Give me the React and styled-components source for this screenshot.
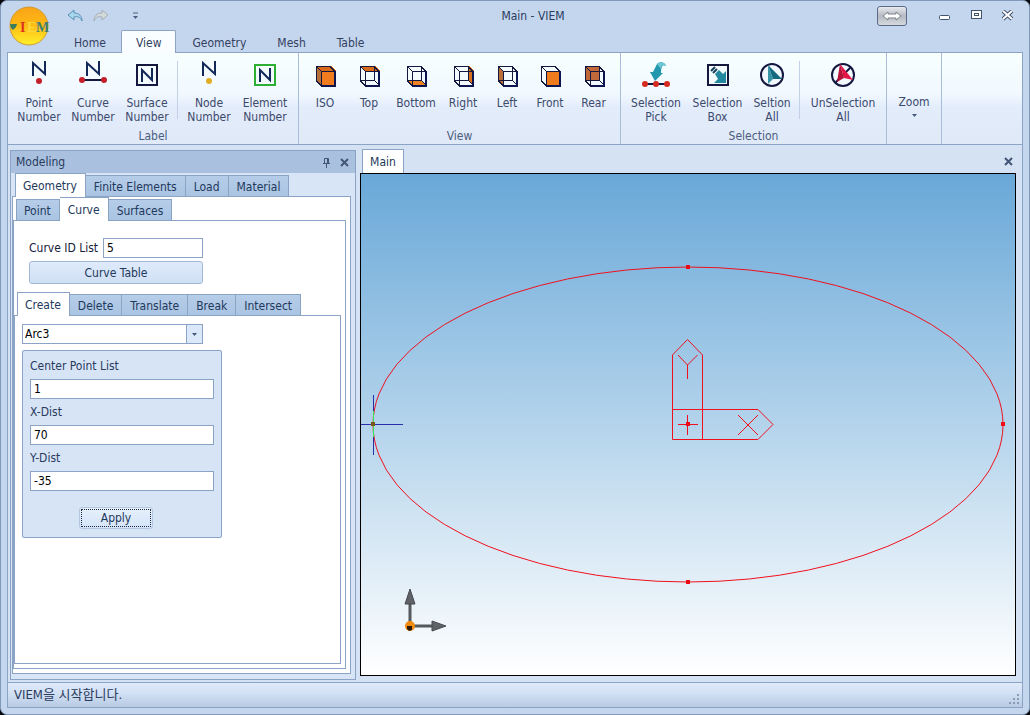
import React, { useState } from "react";
import styled, { createGlobalStyle, css } from "styled-components";

const GlobalStyle = createGlobalStyle`
  *, *::before, *::after { box-sizing: border-box; }
  html, body { margin: 0; background: #05070a; }
  body, button, input, select {
    font-family: "DejaVu Sans Condensed", "Noto Sans CJK KR", sans-serif;
    font-size: 12px;
    line-height: 14px;
  }
  button { cursor: pointer; }
`;

const line = "#8ba3c4";
const ink = "#2a3b5e";

const Window = styled.div`
  min-height: 100vh;
  display: flex;
  flex-direction: column;
  padding: 0 7px 6px;
  background: #c4d6ee;
  border: 1px solid #8299b8;
  border-radius: 7px;
  color: ${ink};
`;

const Header = styled.header`
  display: grid;
  grid-template-columns: 50px 1fr;
  grid-template-rows: 29px 22px;
`;

const Logo = styled.button`
  grid-row: 1 / 3;
  padding: 0 0 0 1px;
  border: 0;
  background: none;
  svg { display: block; }
`;

const TitleRow = styled.div`
  display: flex;
  align-items: center;
`;

const QuickAccess = styled.div`
  width: 150px;
  display: flex;
  align-items: center;
  gap: 8px;
  padding-left: 9px;
`;

const WindowTitle = styled.h1`
  flex: 1;
  margin: 0;
  text-align: center;
  font-size: 12px;
  font-weight: 400;
`;

const WindowControls = styled.div`
  width: 164px;
  display: flex;
  justify-content: flex-end;
  align-items: center;
  gap: 15px;
  padding-right: 7px;
`;

const IconButton = styled.button`
  display: block;
  padding: 0;
  border: 0;
  background: none;
  line-height: 0;
`;

const SwitchButton = styled(IconButton)`
  width: 30px;
  height: 20px;
  margin-right: 15px;
  display: grid;
  place-items: center;
  border: 1px solid #5c6b85;
  border-radius: 3px;
  background: linear-gradient(#e8eaee, #b4b9c2 50%, #d6d9de);
`;

const RibbonTabs = styled.nav`
  display: flex;
  align-items: flex-end;
  position: relative;
`;

const RibbonTab = styled.button`
  height: 23px;
  margin-bottom: -1px;
  padding: 2px 14px 0 15px;
  border: 1px solid transparent;
  border-bottom: 0;
  border-radius: 2px 2px 0 0;
  background: none;
  color: #33415f;
  ${(p) => p.$active && css`
    padding: 2px 14px 0;
    border-color: ${line};
    background: #fafdff;
  `}
`;

const Ribbon = styled.section`
  display: flex;
  height: 93px;
  margin: 0 -1px;
  border: 1px solid ${line};
  background: linear-gradient(#f8fffe, #f1f8ff 45%, #e3ecfb 60%, #dfe9f8);
`;

const Group = styled.div`
  display: flex;
  flex-direction: column;
  padding: 0 4px;
  border-right: 1px solid #a9bcd8;
`;

const GroupItems = styled.div`
  flex: 1;
  display: flex;
`;

const GroupLabel = styled.div`
  height: 15px;
  text-align: center;
  color: #4d5d80;
`;

const Divider = styled.span`
  width: 1px;
  height: 58px;
  margin: 8px 4px 0 3px;
  background: #c3d1e6;
`;

const Tool = styled.button`
  width: ${(p) => p.$width}px;
  display: flex;
  flex-direction: column;
  align-items: center;
  gap: 4px;
  padding: 7px 0 0;
  border: 0;
  background: none;
  color: #3c4a6c;
  white-space: pre;
  svg { display: block; }
`;

const ZoomTool = styled(Tool)`
  padding-top: 42px;
  gap: 5px;
`;

const Body = styled.main`
  flex: 1;
  display: flex;
  gap: 4px;
  margin: 0 -1px;
  padding: 5px 6px 2px 2px;
  border: 1px solid ${line};
  border-width: 0 1px;
  background: #d5e2f4;
`;

const Panel = styled.aside`
  width: 346px;
  flex: none;
  display: flex;
  flex-direction: column;
  border: 1px solid ${line};
  background: #d7e5f6;
`;

const PanelHeader = styled.div`
  height: 22px;
  display: flex;
  align-items: center;
  gap: 9px;
  padding: 0 6px 0 5px;
  background: #a9c1de;
`;

const PanelTitle = styled.h2`
  flex: 1;
  margin: 0;
  font-size: 12px;
  font-weight: 400;
`;

const TabStrip = styled.div`
  position: relative;
  display: flex;
  align-items: flex-end;
  height: 24px;
  margin-bottom: -1px;
  padding-left: ${(p) => p.$indent}px;
`;

const Tab = styled.button`
  height: 22px;
  padding: 1px 8px 0;
  border: 1px solid ${line};
  border-left-width: 0;
  background: linear-gradient(#b6cde8, #a9c4e3);
  color: #1e395b;
  &:first-child { border-left-width: 1px; padding-left: 7px; }
  ${(p) => p.$active && css`
    height: 24px;
    padding-bottom: 1px;
    border-bottom: 0;
    background: #fff;
  `}
`;

const Page = styled.div`
  flex: 1;
  display: flex;
  flex-direction: column;
  border: 1px solid ${line};
  background: #fff;
`;

const OuterPage = styled(Page)`
  margin: 0 4px 5px 1px;
  padding: 0 4px 4px 0;
`;

const CurvePage = styled(Page)`
  padding: 17px 4px 4px 0;
`;

const CreatePage = styled(Page)`
  align-items: flex-start;
  gap: 6px;
  padding: 8px 7px;
`;

const CurveForm = styled.div`
  width: 174px;
  display: flex;
  flex-direction: column;
  gap: 3px;
  margin: 0 0 8px 15px;
`;

const InlineField = styled.label`
  display: flex;
  align-items: center;
  justify-content: space-between;
  white-space: nowrap;
  color: #16203a;
`;

const TextInput = styled.input`
  width: ${(p) => p.$width || "100%"};
  height: 20px;
  padding: 0 3px;
  border: 1px solid ${line};
  border-radius: 0;
  background: #fff;
  color: #000;
`;

const WideButton = styled.button`
  height: 23px;
  border: 1px solid #a3b8d5;
  border-radius: 3px;
  background: linear-gradient(#dfebfb, #cfdff5);
  color: #1e395b;
`;

const SelectBox = styled.div`
  position: relative;
  width: 181px;
`;

const Select = styled.select`
  display: block;
  width: 100%;
  height: 20px;
  padding: 0 20px 0 2px;
  appearance: none;
  border: 1px solid ${line};
  border-radius: 0;
  background: #fff;
  color: #000;
`;

const SelectArrow = styled.span`
  position: absolute;
  top: 0;
  right: 0;
  width: 17px;
  height: 20px;
  display: grid;
  place-items: center;
  border: 1px solid ${line};
  background: #dbe8f9;
  pointer-events: none;
`;

const FieldBox = styled.form`
  width: 200px;
  display: flex;
  flex-direction: column;
  gap: 6px;
  padding: 8px 7px;
  border: 1px solid ${line};
  border-radius: 2px;
  background: #d6e4f6;
`;

const Field = styled.label`
  display: flex;
  flex-direction: column;
  gap: 6px;
`;

const Actions = styled.div`
  display: flex;
  justify-content: center;
  padding: 10px 12px 0 0;
`;

const ApplyButton = styled.button`
  width: 74px;
  height: 22px;
  padding: 0;
  border: 1px solid #b4c6e0;
  border-radius: 3px;
  outline: 1px dotted #1b2740;
  outline-offset: -3px;
  background: linear-gradient(#e6f0fc, #d5e4f8);
  color: #1e395b;
`;

const DocumentArea = styled.section`
  flex: 1;
  min-width: 0;
  display: flex;
  flex-direction: column;
`;

const DocumentBar = styled.div`
  height: 23px;
  display: flex;
  align-items: center;
  justify-content: space-between;
  padding: 0 3px 0 2px;
`;

const DocumentTab = styled.button`
  align-self: flex-end;
  width: 42px;
  height: 24px;
  padding: 0;
  border: 1px solid ${line};
  border-bottom: 0;
  background: #fff;
  color: #1e395b;
`;

const Viewport = styled.div`
  flex: 1;
  min-height: 0;
  display: flex;
  margin-bottom: 4px;
  border: 1px solid #000;
  background: linear-gradient(#69a8d8, #fff);
  svg { flex: 1; min-width: 0; }
`;

const StatusBar = styled.footer`
  height: 26px;
  display: flex;
  align-items: center;
  justify-content: space-between;
  margin: 0 -1px;
  padding: 0 2px 0 6px;
  border: 1px solid ${line};
  background: linear-gradient(#dfeafa, #d3e1f4 40%, #b7cbe4);
  font-size: 13px;
`;

const Grip = styled.svg`
  align-self: flex-end;
  margin-bottom: 2px;
`;

const navy = "#14183f";

function LogoMark() {
  return (
    <svg width="42" height="42" viewBox="0 0 42 42" aria-hidden="true">
      <defs>
        <linearGradient id="sun" x1="0" y1="0" x2="0" y2="1">
          <stop offset="0" stopColor="#f9a318" />
          <stop offset="0.45" stopColor="#fdb813" />
          <stop offset="1" stopColor="#fff02a" />
        </linearGradient>
      </defs>
      <circle cx="20" cy="20" r="19" fill="url(#sun)" stroke="#cf9a35" />
      <path d="M1 18h7l-1 3-3 3-2-2z" fill="#3a7d5a" />
      <g fontFamily="Liberation Serif" fontWeight="700" fontSize="14">
        <text x="11" y="26" fill="#e0301e">I</text>
        <text x="18" y="26" fill="#ffd83a">E</text>
        <text x="27" y="26" fill="#3f7f74">M</text>
      </g>
    </svg>
  );
}

const Letter = () => (
  <path d="M10 16V3L22 14V1" fill="none" stroke="#122858" strokeWidth="2" />
);

const BoxedLetter = () => (
  <path d="M11 22V10L21 20V8" fill="none" stroke="#122858" strokeWidth="2" />
);

const Frame = ({ color }) => (
  <rect x="6" y="5" width="20" height="20" fill="none" stroke={color} strokeWidth="2" />
);

const toolIcons = {
  point: <><Letter /><circle cx="16" cy="21" r="3" fill="#c3202b" /></>,
  curve: (
    <><Letter /><path d="M5 20h22" stroke={navy} strokeWidth="2" />
      <circle cx="5" cy="20" r="3" fill="#c3202b" /><circle cx="27" cy="20" r="3" fill="#c3202b" /></>
  ),
  surface: <><Frame color={navy} /><BoxedLetter /></>,
  node: <><Letter /><circle cx="16" cy="21" r="3" fill="#e0ae22" /></>,
  element: <><Frame color="#2dae35" /><BoxedLetter /></>,
  pick: (
    <>
      <path d="M13 12L17 4c3-3 8-2 9 2-3-2-5 0-5 7h2l-8 8-5-9z" fill="#2397ad" />
      <path d="M17 4c3-3 8-2 9 2-3-2-5 0-5 3z" fill="#6cc6d3" />
      <path d="M5 24h22" stroke={navy} strokeWidth="2" />
      <circle cx="5" cy="24" r="3" fill="#d42a20" /><circle cx="16" cy="24" r="3" fill="#d42a20" /><circle cx="27" cy="24" r="3" fill="#d42a20" />
    </>
  ),
  box: (
    <>
      <Frame color={navy} />
      <path d="M9 11l4-4M11 13l4-4" stroke="#17405a" strokeWidth="2" />
      <path d="M13 14l4-4 4 4 3-3v12H12l4-4z" fill="#2188a0" />
    </>
  ),
  all: (
    <>
      <circle cx="16" cy="15" r="11" fill="#f3faff" stroke={navy} strokeWidth="2" />
      <path d="M12 5v19l5-5z" fill="#3795a6" /><path d="M12 5l5 14h9z" fill="#166a80" />
    </>
  ),
  none: (
    <>
      <circle cx="16" cy="15" r="11" fill="#f3faff" stroke={navy} strokeWidth="2" />
      <path d="M24 7L8 23" stroke={navy} strokeWidth="2" />
      <path d="M13 4L10 22l7-4z" fill="#b41238" /><path d="M13 4l4 14 9 2z" fill="#e41444" />
    </>
  ),
};

const faces = {
  top: "7,6 12,11 27,11 22,6",
  bottom: "7,21 12,26 27,26 22,21",
  right: "22,6 27,11 27,26 22,21",
  left: "7,6 12,11 12,26 7,21",
  front: "12,11 27,11 27,26 12,26",
  rear: "7,6 22,6 22,21 7,21",
};

const shades = { top: "#d96a1c", bottom: "#ee8322", right: "#d8701c", left: "#b87038", front: "#f07c1e", rear: "#c0683a" };

function Cube({ view }) {
  const iso = view === "iso";
  const filled = iso ? ["top", "left", "front"] : [view];
  const hidesBack = iso || view === "front";
  return (
    <g shapeRendering="crispEdges">
      {filled.map((f) => <polygon key={f} points={faces[f]} fill={shades[f]} />)}
      {!hidesBack && <path d="M7 20.500H21.500V6M21.500 20.500L27 26" fill="none" stroke={navy} />}
      <path d="M7.500 21V6.500H21L26 11.500H12.500V26L7.500 21M7.500 6.500l5 5" fill="none" stroke={navy} />
      <path d="M12 26h14V11" fill="none" stroke="#0d1550" strokeWidth="2" />
    </g>
  );
}

function ToolButton({ icon, view, label, width }) {
  return (
    <Tool $width={width}>
      <svg width="32" height="32" viewBox="0 0 32 32" aria-hidden="true">
        {view ? <Cube view={view} /> : toolIcons[icon]}
      </svg>
      {label}
    </Tool>
  );
}

const groups = [
  {
    label: "Label",
    tools: [
      { icon: "point", label: "Point\nNumber", width: 54 },
      { icon: "curve", label: "Curve\nNumber", width: 54 },
      { icon: "surface", label: "Surface\nNumber", width: 54 },
      null,
      { icon: "node", label: "Node\nNumber", width: 54 },
      { icon: "element", label: "Element\nNumber", width: 58 },
    ],
  },
  {
    label: "View",
    tools: [
      { view: "iso", label: "ISO", width: 44 },
      { view: "top", label: "Top", width: 44 },
      { view: "bottom", label: "Bottom", width: 50 },
      { view: "right", label: "Right", width: 44 },
      { view: "left", label: "Left", width: 44 },
      { view: "front", label: "Front", width: 42 },
      { view: "rear", label: "Rear", width: 45 },
    ],
  },
  {
    label: "Selection",
    tools: [
      { icon: "pick", label: "Selection\nPick", width: 62 },
      { icon: "box", label: "Selection\nBox", width: 61 },
      { icon: "all", label: "Seltion\nAll", width: 48 },
      null,
      { icon: "none", label: "UnSelection\nAll", width: 78 },
    ],
  },
];

function Tabs({ items, initial, indent, label }) {
  const [active, setActive] = useState(initial);
  return (
    <TabStrip role="tablist" aria-label={label} $indent={indent}>
      {items.map((t) => (
        <Tab key={t} role="tab" aria-selected={t === active} $active={t === active} onClick={() => setActive(t)}>
          {t}
        </Tab>
      ))}
    </TabStrip>
  );
}

const Caret = () => (
  <svg width="5" height="3" viewBox="0 0 5 3" aria-hidden="true"><path d="M0 0h5L2.500 3z" fill="#44587c" /></svg>
);

const Cross = () => (
  <svg width="9" height="9" viewBox="0 0 9 9" aria-hidden="true"><path d="M1 1l7 7M8 1L1 8" stroke="#435675" strokeWidth="2" /></svg>
);

function Model() {
  return (
    <svg viewBox="361 174 654 501" role="img" aria-label="Ellipse model">
      <g fill="none" stroke="#f0101c" strokeWidth="1">
        <ellipse cx="688" cy="424.500" rx="315" ry="157.500" />
        <path d="M672.500 439.500V355l15-15.500 15 15.500v84.500M672.500 409.500H758l15 15-15 15h-85.500" />
        <path d="M678 355l9.500 10 10-10M687.500 365v14M738 415l20 20M758 415l-20 20M678 424.500h20M687.500 415v20" />
      </g>
      <g shapeRendering="crispEdges">
        <path d="M361 424.500h42M373.500 395v60" stroke="#2a2fa8" />
        <path d="M373.500 411v26" stroke="#3be35a" />
      </g>
      <g fill="#ee0a14">
        <rect x="686" y="265" width="4" height="4" /><rect x="686" y="580" width="4" height="4" />
        <rect x="1001" y="422" width="4" height="4" /><rect x="686" y="422" width="4" height="4" />
      </g>
      <rect x="371" y="422" width="4" height="4" fill="#7a5a1c" />
      <path d="M410 622v-20M414 626h20" stroke="#55585c" strokeWidth="3" />
      <path d="M405 604l5-15 5 15zM432 621l14 5-14 5z" fill="#5f6266" stroke="#46494d" strokeWidth="1" />
      <circle cx="410" cy="626" r="5" fill="#f08a10" />
      <path d="M407 626h5v4l-3 1-2-2z" fill="#2c1a08" />
    </svg>
  );
}

export default function App() {
  const [ribbonTab, setRibbonTab] = useState("View");
  return (
    <>
      <GlobalStyle />
      <Window>
        <Header>
          <Logo aria-label="Application menu"><LogoMark /></Logo>
          <TitleRow>
            <QuickAccess>
              <IconButton aria-label="Undo">
                <svg width="17" height="14" viewBox="0 0 17 14"><path d="M1 6l6-5v3c5 0 8 3 8 8-2-4-4-5-8-4v3z" fill="#a9d8ee" stroke="#5b8fb5" /></svg>
              </IconButton>
              <IconButton aria-label="Redo">
                <svg width="17" height="14" viewBox="0 0 17 14"><path d="M16 6l-6-5v3C5 4 2 7 2 12c2-4 4-5 8-4v3z" fill="#d3d8d8" stroke="#a3adb6" /></svg>
              </IconButton>
              <IconButton aria-label="Customize toolbar">
                <svg width="30" height="8" viewBox="0 0 30 8"><path d="M16 1h5" stroke="#4c5f80" /><path d="M16 4h5l-2.500 3z" fill="#4c5f80" /></svg>
              </IconButton>
            </QuickAccess>
            <WindowTitle>Main - VIEM</WindowTitle>
            <WindowControls>
              <SwitchButton aria-label="Switch window">
                <svg width="20" height="10" viewBox="0 0 20 10"><path d="M1 5l5-4v2h8V1l5 4-5 4V7H6v2z" fill="#fff" stroke="#7d818a" /></svg>
              </SwitchButton>
              <IconButton aria-label="Minimize">
                <svg width="16" height="12" viewBox="0 0 16 12"><rect x="2.500" y="5.500" width="10" height="4" rx="1" fill="#fff" stroke="#42536f" /></svg>
              </IconButton>
              <IconButton aria-label="Maximize">
                <svg width="16" height="12" viewBox="0 0 16 12"><rect x="3.500" y="0.500" width="10" height="8" fill="#fff" stroke="#42536f" /><rect x="6.500" y="3.500" width="4" height="2" fill="none" stroke="#42536f" /></svg>
              </IconButton>
              <IconButton aria-label="Close">
                <svg width="16" height="12" viewBox="0 0 16 12"><path d="M4 1l9 8M13 1l-9 8" stroke="#42536f" strokeWidth="4" /><path d="M4 1l9 8M13 1l-9 8" stroke="#fff" strokeWidth="2" /></svg>
              </IconButton>
            </WindowControls>
          </TitleRow>
          <RibbonTabs role="tablist" aria-label="Ribbon">
            {["Home", "View", "Geometry", "Mesh", "Table"].map((t) => (
              <RibbonTab key={t} role="tab" aria-selected={t === ribbonTab} $active={t === ribbonTab} onClick={() => setRibbonTab(t)}>
                {t}
              </RibbonTab>
            ))}
          </RibbonTabs>
        </Header>

        <Ribbon>
          {groups.map((g) => (
            <Group key={g.label}>
              <GroupItems>
                {g.tools.map((t, i) => (t ? <ToolButton key={t.label} {...t} /> : <Divider key={i} />))}
              </GroupItems>
              <GroupLabel>{g.label}</GroupLabel>
            </Group>
          ))}
          <Group>
            <ZoomTool $width={46}>Zoom<Caret /></ZoomTool>
          </Group>
        </Ribbon>

        <Body>
          <Panel>
            <PanelHeader>
              <PanelTitle>Modeling</PanelTitle>
              <IconButton aria-label="Pin panel">
                <svg width="9" height="11" viewBox="0 0 9 11"><path d="M2.500 6V1.500h4V6M1 6.500h7M4.500 7v4M5.500 1v5" fill="none" stroke="#435675" /></svg>
              </IconButton>
              <IconButton aria-label="Close panel"><Cross /></IconButton>
            </PanelHeader>
            <Tabs label="Model" indent={4} initial="Geometry" items={["Geometry", "Finite Elements", "Load", "Material"]} />
            <OuterPage>
              <Tabs label="Geometry" indent={3} initial="Curve" items={["Point", "Curve", "Surfaces"]} />
              <CurvePage>
                <CurveForm>
                  <InlineField>
                    Curve ID List
                    <TextInput $width="100px" defaultValue="5" />
                  </InlineField>
                  <WideButton>Curve Table</WideButton>
                </CurveForm>
                <Tabs label="Curve" indent={3} initial="Create" items={["Create", "Delete", "Translate", "Break", "Intersect"]} />
                <CreatePage>
                  <SelectBox>
                    <Select aria-label="Curve type" defaultValue="Arc3"><option>Arc3</option></Select>
                    <SelectArrow><Caret /></SelectArrow>
                  </SelectBox>
                  <FieldBox onSubmit={(e) => e.preventDefault()}>
                    <Field>Center Point List<TextInput defaultValue="1" /></Field>
                    <Field>X-Dist<TextInput defaultValue="70" /></Field>
                    <Field>Y-Dist<TextInput defaultValue="-35" /></Field>
                    <Actions><ApplyButton>Apply</ApplyButton></Actions>
                  </FieldBox>
                </CreatePage>
              </CurvePage>
            </OuterPage>
          </Panel>
          <DocumentArea>
            <DocumentBar>
              <DocumentTab>Main</DocumentTab>
              <IconButton aria-label="Close document"><Cross /></IconButton>
            </DocumentBar>
            <Viewport><Model /></Viewport>
          </DocumentArea>
        </Body>

        <StatusBar>
          <span>VIEM을 시작합니다.</span>
          <Grip width="11" height="11" viewBox="0 0 11 11" aria-hidden="true">
            <path d="M8 0h2v2H8zM4 4h2v2H4zM8 4h2v2H8zM0 8h2v2H0zM4 8h2v2H4zM8 8h2v2H8z" fill="#8b9cb8" />
          </Grip>
        </StatusBar>
      </Window>
    </>
  );
}
